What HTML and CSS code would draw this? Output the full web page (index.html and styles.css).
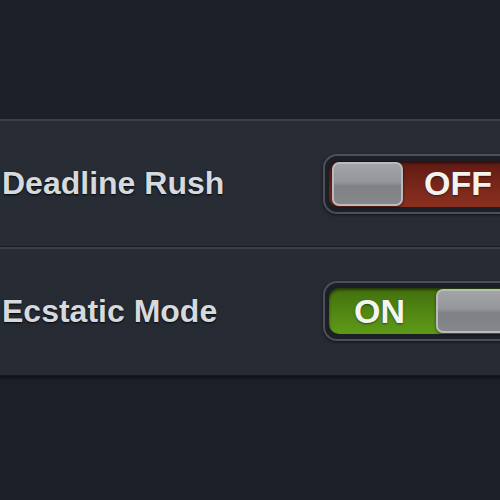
FILE: index.html
```html
<!DOCTYPE html>
<html lang="en">
<head>
    <meta charset="UTF-8">
    <meta name="viewport" content="width=device-width, initial-scale=1.0">
    <title>Settings</title>
    <link rel="stylesheet" href="styles.css">
</head>
<body>
    <div class="page">
        <div class="panel">
            <div class="row">
                <span class="label">Deadline Rush</span>
                <div class="switch">
                    <div class="fill off">
                        <div class="knob"></div>
                        <span class="state">OFF</span>
                    </div>
                </div>
            </div>
            <div class="row">
                <span class="label">Ecstatic Mode</span>
                <div class="switch">
                    <div class="fill on">
                        <span class="state">ON</span>
                        <div class="knob"></div>
                    </div>
                </div>
            </div>
        </div>
    </div>
</body>
</html>
```

FILE: styles.css
```css
body {
    margin: 0;
    height: 500px;
    overflow: hidden;
    background-color: #1d2028;
    font-family: "Liberation Sans", Arial, sans-serif;
}
.page {
    padding-top: 119px;
}
.panel {
    width: 540px;
    margin-left: -20px;
    background: linear-gradient(to bottom, #272c35, #262b33);
    border-top: 2px solid #3a4049;
    border-bottom: 1px solid #15181d;
    box-shadow: 0 2px 4px rgba(0, 0, 0, 0.5);
}
.row {
    display: flex;
    justify-content: space-between;
    align-items: center;
    height: 125px;
    padding-left: 22px;
}
.row + .row {
    height: 128px;
    border-top: 1px solid #181b21;
    box-shadow: inset 0 2px 0 #393f48;
}
.label {
    font-size: 32px;
    font-weight: bold;
    color: #d6d9dd;
    text-shadow: 0 1px 2px rgba(0, 0, 0, 0.9);
}
.switch {
    width: 197px;
    height: 60px;
    padding: 5px 0 5px 4px;
    border: 2px solid #4b5058;
    border-right: none;
    border-radius: 14px 0 0 14px;
    background-color: #1c1f25;
    box-shadow: 0 1px 3px rgba(0, 0, 0, 0.6);
    box-sizing: border-box;
    flex-shrink: 0;
}
.fill {
    display: flex;
    align-items: center;
    height: 100%;
    border-radius: 10px 0 0 10px;
    padding-left: 3px;
    box-shadow: inset 0 2px 3px rgba(0, 0, 0, 0.5);
}
.fill.off {
    background: linear-gradient(to bottom, #5e1a13, #7b281b 60%, #8a3020);
}
.fill.on {
    background: linear-gradient(to bottom, #426f0e, #538a14 60%, #5e9a18);
}
.knob {
    width: 71px;
    height: 44px;
    border-radius: 7px;
    border: 2px solid #b9bbbe;
    box-sizing: border-box;
    background: linear-gradient(to bottom, #a2a4a7, #94969a 45%, #7f8185 55%, #85878b);
    box-shadow: 0 1px 3px rgba(0, 0, 0, 0.6);
    flex-shrink: 0;
}
.state {
    font-size: 34px;
    font-weight: bold;
    color: #f3f3f0;
    text-shadow: 0 1px 2px rgba(0, 0, 0, 0.5);
}
.off .state {
    margin-left: 21px;
}
.on .state {
    margin-left: 22px;
    margin-right: 31px;
}
```
